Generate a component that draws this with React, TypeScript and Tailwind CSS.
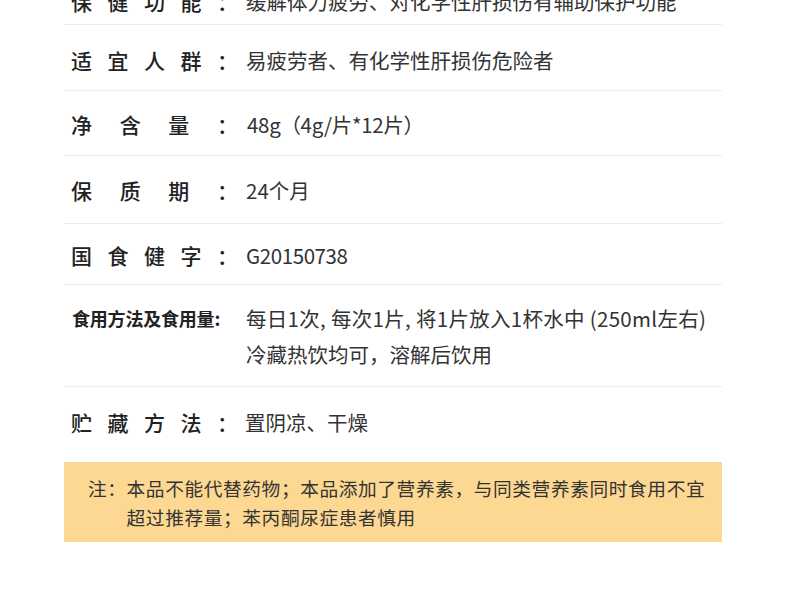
import React from "react";

const font = { fontFamily: '"Noto Sans CJK SC", "Noto Sans", sans-serif' };

function Label({ text }: { text: string }) {
  const chars = Array.from(text + "：");
  return (
    <div className="flex w-[167px] shrink-0 justify-between text-[21px] font-medium text-[#222]">
      {chars.map((c, i) => (
        <span key={i}>{c}</span>
      ))}
    </div>
  );
}

export default function App() {
  return (
    <div className="min-h-[590px] w-[790px] overflow-hidden bg-white" style={font}>
      <div className="-mt-[34px] ml-[64px] w-[658px]">
        <div className="flex border-b border-[#ececec] pb-[8px] pl-[7px] pt-[20px] leading-[30px]">
          <Label text="保健功能" />
          <div className="ml-[8px] whitespace-nowrap text-[20.5px] text-[#333]">缓解体力疲劳、对化学性肝损伤有辅助保护功能</div>
        </div>
        <div className="flex border-b border-[#ececec] pb-[15px] pl-[7px] pt-[20px] leading-[30px]">
          <Label text="适宜人群" />
          <div className="ml-[8px] whitespace-nowrap text-[20.5px] text-[#333]">易疲劳者、有化学性肝损伤危险者</div>
        </div>
        <div className="flex border-b border-[#ececec] pb-[16px] pl-[7px] pt-[18px] leading-[30px]">
          <Label text="净含量" />
          <div className="ml-[9px] whitespace-nowrap text-[20.5px] tracking-[-0.3px] text-[#333]">48g（4g/片*12片）</div>
        </div>
        <div className="flex border-b border-[#ececec] pb-[18px] pl-[7px] pt-[19px] leading-[30px]">
          <Label text="保质期" />
          <div className="ml-[8px] whitespace-nowrap text-[20.5px] text-[#333]">24个月</div>
        </div>
        <div className="flex border-b border-[#ececec] pb-[14px] pl-[7px] pt-[16px] leading-[30px]">
          <Label text="国食健字" />
          <div className="ml-[8px] whitespace-nowrap text-[20.5px] tracking-[-0.4px] text-[#333]">G20150738</div>
        </div>
        <div className="flex border-b border-[#ececec] pb-[14px] pl-[8px] pt-[15px] leading-[36px]">
          <div className="w-[174px] shrink-0 whitespace-nowrap text-[18px] font-bold tracking-[-0.2px] text-[#222]">食用方法及食用量:</div>
          <div className="whitespace-nowrap text-[20.5px] text-[#333]">
            <div className="tracking-[0.3px]">每日1次, 每次1片, 将1片放入1杯水中 (250ml左右)</div>
            <div>冷藏热饮均可，溶解后饮用</div>
          </div>
        </div>
        <div className="flex pb-[25px] pl-[7px] pt-[20px] leading-[30px]">
          <Label text="贮藏方法" />
          <div className="ml-[7px] whitespace-nowrap text-[20.5px] text-[#333]">置阴凉、干燥</div>
        </div>
        <div className="flex bg-[#fdd892] py-[11px] pl-[24px] text-[18.7px] leading-[29px] tracking-[0.6px] text-[#333]">
          <span className="shrink-0">注：</span>
          <div className="whitespace-nowrap">
            <div>本品不能代替药物；本品添加了营养素，与同类营养素同时食用不宜</div>
            <div>超过推荐量；苯丙酮尿症患者慎用</div>
          </div>
        </div>
      </div>
    </div>
  );
}
